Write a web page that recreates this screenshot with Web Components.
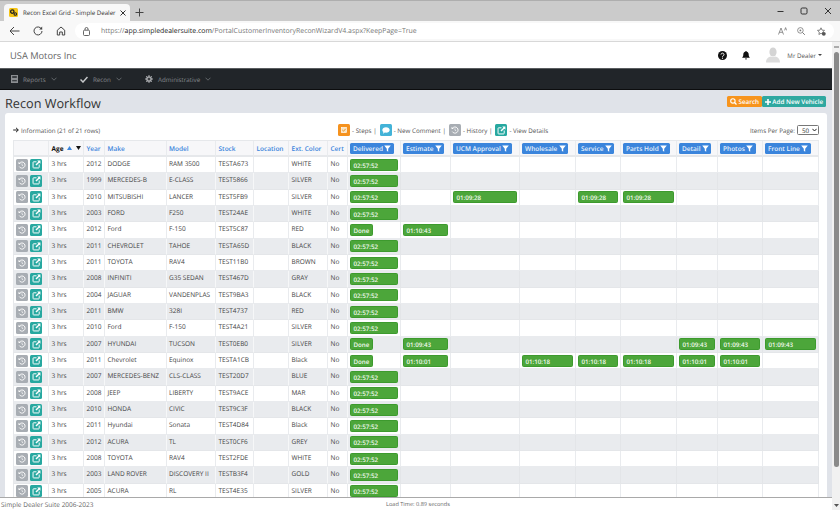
<!DOCTYPE html>
<html>
<head>
<meta charset="utf-8">
<title>Recon Excel Grid</title>
<style>
  html,body{margin:0;padding:0;width:840px;height:510px;overflow:hidden;background:#fff;}
  body{font-family:"Open Sans","Liberation Sans",sans-serif;text-rendering:geometricPrecision;}
</style>
</head>
<body>
<recon-app>
  <win-chrome slot="chrome"></win-chrome>
  <site-header slot="top"></site-header>
  <site-nav slot="top"></site-nav>
  <recon-page>
    <recon-grid></recon-grid>
  </recon-page>
  <site-footer slot="bottom"></site-footer>
  <page-scroll slot="scroll"></page-scroll>
</recon-app>
<script>
const ICON={
  history:`<svg viewBox="0 0 12 12" width="8" height="8"><path d="M2.4 3.2A4.6 4.6 0 1 1 2 8.400" fill="none" stroke="#fff" stroke-width="1.4"/><path d="M.8 1.200v3.400h3.400z" fill="#fff"/><path d="M6 3.600v2.800l1.900 1.100" fill="none" stroke="#fff" stroke-width="1"/></svg>`,
  open:`<svg viewBox="0 0 12 12" width="9" height="9"><path d="M6 2.4H2.2a.8.8 0 0 0-.8.8v6.6c0 .4.4.8.8.8h6.6c.4 0 .8-.4.8-.8V6" fill="none" stroke="#fff" stroke-width="1.3"/><path d="M7 .8h4.2V5L9.7 3.6 6 7.4 4.6 6l3.8-3.8z" fill="#fff"/></svg>`,
  funnel:`<svg viewBox="0 0 10 10" width="7" height="7"><path d="M.3 .6h9.4L6 5.2V9.6L4 8.3V5.2z" fill="#fff"/></svg>`
};

class WinChrome extends HTMLElement{
  constructor(){
    super();
    this.attachShadow({mode:'open'}).innerHTML=`
      <style>
        :host{display:block;height:42px;font-family:"Open Sans","Liberation Sans",sans-serif;color:#333;}
        .strip{height:21px;background:#cbcbcb;border-top:1px solid #aeaeae;box-sizing:border-box;display:flex;align-items:flex-end;padding-left:4px;}
        .tab{width:126px;height:17px;background:#f8f8f8;border-radius:4px 4px 0 0;box-sizing:border-box;display:flex;align-items:center;padding:0 5px;gap:5px;font-size:6.150px;white-space:nowrap;}
        .tab span{width:91px;flex:none;}
        .tab svg{flex:none;}
        .plus{margin:0 0 3px 4px;width:11px;height:11px;}
        .win{margin:0 8px 3px auto;display:flex;gap:14px;height:14px;align-items:center;}
        .bar{height:21px;background:#f8f8f8;border-bottom:1px solid #d8d8d8;box-sizing:border-box;display:flex;align-items:center;padding:0 6px 0 9px;}
        .bar>svg{flex:none;}
        .addr{margin-left:9px;flex:1;height:16px;background:#fff;border-radius:8px;display:flex;align-items:center;padding:0 8px;gap:8px;font-size:6.930px;color:#777;white-space:nowrap;}
        .addr b{font-weight:400;color:#222;}
        .addr .r{margin-left:auto;display:flex;gap:10px;align-items:center;}
      </style>
      <div class="strip">
        <div class="tab">
          <svg width="9" height="9" viewBox="0 0 9 9"><rect width="9" height="9" rx="1.5" fill="#f5c518"/><circle cx="3.3" cy="3.6" r="1.7" fill="none" stroke="#222" stroke-width="1.3"/><circle cx="6.3" cy="6" r="1.3" fill="none" stroke="#222" stroke-width="1.1"/></svg>
          <span>Recon Excel Grid - Simple Dealer</span>
          <svg width="6" height="6" viewBox="0 0 6 6" style="margin-left:1px"><path d="M.5 .5l5 5M5.500 .5l-5 5" stroke="#333" stroke-width="1"/></svg>
        </div>
        <svg class="plus" viewBox="0 0 11 11"><path d="M5.500 1.500v8M1.500 5.500h8" stroke="#444" stroke-width="1"/></svg>
        <div class="win">
          <svg width="8" height="8" viewBox="0 0 8 8"><path d="M1.500 4.500h6" stroke="#333" stroke-width="1"/></svg>
          <svg width="8" height="8" viewBox="0 0 8 8" style="margin-left:2px"><rect x="1" y="1" width="6" height="6" rx="1.200" fill="none" stroke="#333"/></svg>
          <svg width="8" height="8" viewBox="0 0 8 8" style="margin-left:2px"><path d="M1 1l6 6M7 1l-6 6" stroke="#333" stroke-width="1"/></svg>
        </div>
      </div>
      <div class="bar">
        <svg width="11" height="10" viewBox="0 0 11 10"><path d="M10.500 5H1M5 1L1 5l4 4" fill="none" stroke="#444" stroke-width="1"/></svg>
        <svg width="10" height="10" viewBox="0 0 10 10" style="margin-left:13px"><path d="M8.600 3.200A4 4 0 1 0 9 5" fill="none" stroke="#444" stroke-width="1"/><path d="M6.200 3.400h3V.6z" fill="#444"/></svg>
        <svg width="10" height="10" viewBox="0 0 10 10" style="margin-left:13px"><path d="M1.300 9V4.200L5 1l3.700 3.200V9H6.300V6H3.700v3z" fill="none" stroke="#444" stroke-width="1"/></svg>
        <div class="addr">
          <svg width="7" height="9" viewBox="0 0 7 9"><rect x=".5" y="3.200" width="6" height="5.300" rx="1" fill="none" stroke="#555" stroke-width=".9"/><path d="M2 3V2a1.500 1.500 0 0 1 3 0v1" fill="none" stroke="#555" stroke-width=".9"/></svg>
          <div style="margin-left:3px">https://<b>app.simpledealersuite.com</b>/PortalCustomerInventoryReconWizardV4.aspx?KeepPage=True</div>
          <div class="r">
            <svg width="9" height="8" viewBox="0 0 9 8"><path d="M.5 7.500L3 1l2.500 6.500M1.300 5.300h3.400M6.600 3.400l1-2.800 1 2.800" fill="none" stroke="#777" stroke-width=".8"/></svg>
            <svg width="8" height="8" viewBox="0 0 8 8"><circle cx="3.400" cy="3.400" r="2.800" fill="none" stroke="#777" stroke-width=".8"/><circle cx="3.400" cy="3.400" r=".9" fill="#777"/><path d="M5.500 5.500L7.800 7.800" stroke="#777"/></svg>
            <svg width="9" height="9" viewBox="0 0 9 9" style="margin-left:2px"><path d="M4 .8l1 2.300 2.500.3-1.800 1.700.4 2.400L4 6.300 1.900 7.500l.4-2.400L.5 3.400 3 3.100z" fill="none" stroke="#666" stroke-width=".8"/><circle cx="6.800" cy="6.800" r="1.900" fill="#555"/></svg>
          </div>
        </div>
      </div>`;
  }
}

class SiteHeader extends HTMLElement{
  constructor(){
    super();
    this.attachShadow({mode:'open'}).innerHTML=`
      <style>
        :host{display:flex;align-items:center;height:26px;background:#fff;padding:0 10px;font-family:"Open Sans","Liberation Sans",sans-serif;}
        .brand{font-size:9.300px;color:#666;}
        .r{margin-left:auto;display:flex;align-items:center;}
        .who{font-size:6.200px;color:#555;margin-left:7px;}
        .caret{width:0;height:0;border:2.500px solid transparent;border-top-color:#444;border-bottom:0;margin-left:2px;}
      </style>
      <div class="brand">USA Motors Inc</div>
      <div class="r">
        <svg width="9" height="9" viewBox="0 0 9 9"><circle cx="4.500" cy="4.500" r="4.500" fill="#111"/><path d="M3 3.500a1.500 1.400 0 1 1 2.200 1.300c-.5.300-.7.500-.7 1" fill="none" stroke="#fff" stroke-width="1"/><circle cx="4.500" cy="7.200" r=".6" fill="#fff"/></svg>
        <svg width="8" height="9" viewBox="0 0 8 9" style="margin-left:15px"><path d="M4 0a.7.7 0 0 1 .7.8C6 1.100 6.700 2.200 6.700 3.600c0 1.800.6 2.600 1.300 3.200H0c.7-.6 1.300-1.400 1.300-3.200C1.300 2.200 2 1.100 3.300.8A.7.7 0 0 1 4 0zM3 7.400h2a1 1 0 0 1-2 .1z" fill="#111"/></svg>
        <svg width="14" height="16" viewBox="0 0 14 16" style="margin-left:16px"><rect width="14" height="16" fill="#fff"/><ellipse cx="7" cy="5" rx="3.600" ry="4.600" fill="#d4d4d4"/><path d="M0 15.500c0-4 2.500-5.500 5-6 1 .8 3 .8 4 0 2.500.5 5 2 5 6z" fill="#dcdcdc"/></svg>
        <div class="who">Mr Dealer</div>
        <div class="caret"></div>
      </div>`;
  }
}

class SiteNav extends HTMLElement{
  constructor(){
    super();
    const caret=`<svg width="6" height="4" viewBox="0 0 6 4"><path d="M.5 .7L3 3.200 5.500 .7" fill="none" stroke="#7d8186" stroke-width=".7"/></svg>`;
    this.attachShadow({mode:'open'}).innerHTML=`
      <style>
        :host{display:flex;align-items:center;height:22px;box-sizing:border-box;background:#212529;border-top:1px solid #5a5d60;border-bottom:1px solid #0c0d0e;padding-left:11px;font:6.250px "Open Sans","Liberation Sans",sans-serif;color:#85888c;}
        div{display:flex;align-items:center;gap:5px;}
      </style>
      <div style="width:69px"><svg width="7" height="8" viewBox="0 0 7 8"><path d="M0 0h7v8H0zM1.200 1.200v1.500h4.600V1.200zM1.200 5.300v.9h4.600v-.9z" fill="#8b8e92" fill-rule="evenodd"/></svg>Reports ${caret}</div>
      <div style="width:65px"><svg width="8" height="7" viewBox="0 0 8 7"><path d="M.5 3.500L3 6 7.500 1" fill="none" stroke="#c6c8ca" stroke-width="1.500"/></svg>Recon ${caret}</div>
      <div><svg width="8" height="8" viewBox="0 0 8 8"><circle cx="4" cy="4" r="2.200" fill="none" stroke="#a9abae" stroke-width="1.300"/><path d="M4 0v8M0 4h8M1.200 1.200l5.600 5.600M6.800 1.200L1.200 6.800" stroke="#a9abae" stroke-width="1"/><circle cx="4" cy="4" r="1.100" fill="#212529"/></svg>Administrative ${caret}</div>`;
  }
}

class RowBtn extends HTMLElement{
  constructor(){
    super();
    const kind=this.getAttribute('kind')||'history';
    const bg={history:'#a8adb3',open:'#27a8a0',steps:'#f5921e',comment:'#43b3d8'}[kind];
    this.attachShadow({mode:'open'}).innerHTML=`
      <style>
        :host{display:flex;align-items:center;justify-content:center;flex:none;width:12px;height:12px;border-radius:1.500px;background:${bg};}
      </style>
      ${kind==='steps'?`<svg width="6" height="6" viewBox="0 0 6 6"><rect x=".4" y=".4" width="5.200" height="5.200" fill="#fbe3bd" stroke="#fff" stroke-width=".6"/><path d="M1.300 3l1.200 1.200 2.200-2.400" fill="none" stroke="#d47d12" stroke-width=".8"/></svg>`:
        kind==='comment'?`<svg width="8" height="7" viewBox="0 0 8 7"><path d="M4 .3c2.100 0 3.700 1.200 3.700 2.700S6.100 5.700 4 5.700c-.4 0-.8 0-1.200-.1L1 6.800l.4-1.700C.7 4.600.3 3.800.3 3 .3 1.500 1.900.3 4 .3z" fill="#fff"/></svg>`:
        ICON[kind]}`;
  }
}

class FilterBtn extends HTMLElement{
  constructor(){
    super();
    this.attachShadow({mode:'open'}).innerHTML=`
      <style>
        :host{display:inline-flex;align-items:center;gap:1.500px;height:11px;box-sizing:border-box;padding:0 2.500px 0 3px;background:#3b85dc;border-radius:1.500px;color:#e8f1fb;font:600 6.500px "Open Sans","Liberation Sans",sans-serif;white-space:nowrap;}
      </style>
      <slot></slot>${ICON.funnel}`;
  }
}

class TimeChip extends HTMLElement{
  constructor(){
    super();
    this.attachShadow({mode:'open'}).innerHTML=`
      <style>
        :host{display:block;height:12px;box-sizing:border-box;padding-left:2.500px;background:#4ca63a;border:.5px solid #3d9a2e;border-radius:1.500px;color:#f2f9ef;font:600 6.200px/11px "Open Sans","Liberation Sans",sans-serif;white-space:nowrap;}
        :host([short]){width:23px;}
      </style>
      <slot></slot>`;
  }
}

const COLS=[36,35,21,61.5,49.5,38,35,39,20,53,50,69,56,45,56,41,45,56];
const STAGES=['Delivered','Estimate','UCM Approval','Wholesale','Service','Parts Hold','Detail','Photos','Front Line'];
const D='02:57:52';
const ROWS=[
  ['2012','DODGE','RAM 3500','TESTA673','WHITE',[D]],
  ['1999','MERCEDES-B','E-CLASS','TEST5866','SILVER',[D]],
  ['2010','MITSUBISHI','LANCER','TEST5FB9','SILVER',[D,'','01:09:28','','01:09:28','01:09:28']],
  ['2003','FORD','F250','TEST24AE','WHITE',[D]],
  ['2012','Ford','F-150','TEST5C87','RED',['Done','01:10:43']],
  ['2011','CHEVROLET','TAHOE','TESTA65D','BLACK',[D]],
  ['2011','TOYOTA','RAV4','TEST11B0','BROWN',[D]],
  ['2008','INFINITI','G35 SEDAN','TEST467D','GRAY',[D]],
  ['2004','JAGUAR','VANDENPLAS','TEST9BA3','BLACK',[D]],
  ['2011','BMW','328I','TEST4737','RED',[D]],
  ['2010','Ford','F-150','TEST4A21','SILVER',[D]],
  ['2007','HYUNDAI','TUCSON','TEST0EB0','SILVER',['Done','01:09:43','','','','','01:09:43','01:09:43','01:09:43']],
  ['2011','Chevrolet','Equinox','TESTA1CB','Black',['Done','01:10:01','','01:10:18','01:10:18','01:10:18','01:10:01','01:10:01']],
  ['2007','MERCEDES-BENZ','CLS-CLASS','TEST20D7','BLUE',[D]],
  ['2008','JEEP','LIBERTY','TEST9ACE','MAR',[D]],
  ['2010','HONDA','CIVIC','TEST9C3F','BLACK',[D]],
  ['2011','Hyundai','Sonata','TEST4D84','Black',[D]],
  ['2012','ACURA','TL','TEST0CF6','GREY',[D]],
  ['2008','TOYOTA','RAV4','TEST2FDE','WHITE',[D]],
  ['2003','LAND ROVER','DISCOVERY II','TESTB3F4','GOLD',[D]],
  ['2005','ACURA','RL','TEST4E35','SILVER',[D]]
];

class ReconGrid extends HTMLElement{
  constructor(){
    super();
    const head=['Year','Make','Model','Stock','Location','Ext. Color','Cert'].map(t=>`<div class="c h link">${t}</div>`).join('');
    const stages=STAGES.map(t=>`<div class="c h st"><filter-btn>${t}</filter-btn></div>`).join('');
    const body=ROWS.map((r,i)=>{
      const z=i%2?' z':'';
      const cell=t=>`<div class="c t${z}">${t}</div>`;
      let chips='';
      for(let s=0;s<9;s++){
        const v=r[5][s];
        chips+=`<div class="c st${z}">${v?`<time-chip${v==='Done'?' short':''}>${v}</time-chip>`:''}</div>`;
      }
      return `<div class="c first btns${z}"><row-btn kind="history"></row-btn><row-btn kind="open"></row-btn></div>`+
        cell('3 hrs')+cell(r[0])+cell(r[1])+cell(r[2])+cell(r[3])+cell('')+cell(r[4])+cell('No')+chips;
    }).join('');
    this.attachShadow({mode:'open'}).innerHTML=`
      <style>
        :host{display:block;font:6.500px "Open Sans","Liberation Sans",sans-serif;color:#444;}
        .g{display:grid;grid-template-columns:${COLS.map(w=>w+'px').join(' ')};grid-template-rows:16px;grid-auto-rows:16.330px;border-top:1px solid #e6e8eb;width:806px;box-sizing:border-box;}
        .c{display:flex;align-items:center;box-sizing:border-box;padding-left:2.500px;border-right:1px solid #e9ebee;border-bottom:1px solid #e9ebee;white-space:nowrap;overflow:hidden;background:#fff;}
        .first{border-left:1px solid #e6e8eb;}
        .z{background:#e9ebee;border-bottom-color:#e4e6e9;border-right-color:#e3e5e8;}
        .z.t,.z.btns{border-right-color:#f6f7f8;}
        .t{padding-bottom:2px;}
        .h{background:#f7f7f9;border-bottom:2px solid #e6e8eb;}
        .link{color:#3b85dc;font-weight:600;}
        .age{color:#111;font-weight:700;gap:3px;}
        .st{padding:0 2px;}
        .st time-chip{flex:1;}
        .st time-chip[short]{flex:none;}
        .btns{gap:2px;padding-left:2px;}
      </style>
      <div class="g">
        <div class="c h first"></div>
        <div class="c h age">Age
          <svg width="5" height="4" viewBox="0 0 5 4"><path d="M2.500 0L5 4H0z" fill="#3b85dc"/></svg>
          <svg width="5" height="4" viewBox="0 0 5 4" style="margin-left:1px"><path d="M0 0h5L2.500 4z" fill="#111"/></svg>
        </div>
        ${head}${stages}${body}
      </div>`;
  }
}

class ReconPage extends HTMLElement{
  constructor(){
    super();
    const sep=t=>`<span>- ${t}</span>`;
    this.attachShadow({mode:'open'}).innerHTML=`
      <style>
        :host{display:block;flex:1;min-height:0;overflow:hidden;background:#e0e3e9;padding:0 5px;font-family:"Open Sans","Liberation Sans",sans-serif;}
        .top{display:flex;height:23px;align-items:flex-start;}
        h1{margin:2px 0 0;font-size:12.700px;line-height:22px;font-weight:400;color:#333;}
        .act{margin-left:auto;margin-right:1px;display:flex;padding-top:6px;}
        .act div{height:11px;display:flex;align-items:center;justify-content:center;gap:1.500px;color:#fff;font-size:6.300px;font-weight:600;border-radius:1.500px;}
        .card{background:#fff;border-radius:3px 3px 0 0;padding:10px 8px 0;height:400px;box-sizing:border-box;}
        .tools{display:flex;align-items:center;height:14px;margin-bottom:3px;font-size:6.250px;color:#555;}
        .info{display:flex;align-items:center;gap:2px;width:325px;}
        .leg{display:flex;align-items:center;gap:2px;}
        .leg span{margin-right:1px;white-space:nowrap;}
        .pp{margin-left:auto;display:flex;align-items:center;gap:2px;}
        .sel{width:22px;height:10px;box-sizing:border-box;border:1px solid #777;border-radius:1.500px;display:flex;align-items:center;justify-content:space-between;padding:0 1.500px 0 4px;font-size:6.250px;color:#333;}
      </style>
      <div class="top">
        <h1>Recon Workflow</h1>
        <div class="act">
          <div style="width:35px;background:#f7941d"><svg width="7" height="7" viewBox="0 0 7 7"><circle cx="2.900" cy="2.900" r="2.200" fill="none" stroke="#fff" stroke-width="1.100"/><path d="M4.500 4.500L6.500 6.500" stroke="#fff" stroke-width="1.300"/></svg>Search</div>
          <div style="width:64px;background:#2fa8a0"><svg width="6" height="6" viewBox="0 0 6 6"><path d="M3 0v6M0 3h6" stroke="#fff" stroke-width="1.600"/></svg>Add New Vehicle</div>
        </div>
      </div>
      <div class="card">
        <div class="tools">
          <div class="info"><svg width="6" height="6" viewBox="0 0 6 6"><path d="M.2 3h5M3 .8L5.300 3 3 5.200" fill="none" stroke="#222" stroke-width="1"/></svg>Information (21 of 21 rows)</div>
          <div class="leg">
            <row-btn kind="steps"></row-btn>${sep('Steps |')}
            <row-btn kind="comment"></row-btn>${sep('New Comment |')}
            <row-btn kind="history"></row-btn>${sep('History |')}
            <row-btn kind="open"></row-btn>${sep('View Details')}
          </div>
          <div class="pp">Items Per Page: <div class="sel">50<svg width="5" height="4" viewBox="0 0 5 4"><path d="M.4 .8L2.500 3 4.600 .8" fill="none" stroke="#222" stroke-width="1"/></svg></div></div>
        </div>
        <slot></slot>
      </div>`;
  }
}

class SiteFooter extends HTMLElement{
  constructor(){
    super();
    this.attachShadow({mode:'open'}).innerHTML=`
      <style>
        :host{display:grid;grid-template-columns:385px 1fr;align-items:center;height:13px;box-sizing:border-box;background:#fff;border-top:1px solid #a9a9a9;padding-left:1px;font-family:"Open Sans","Liberation Sans",sans-serif;color:#666;}
        .a{font-size:6.500px;}
        .b{font-size:5.600px;}
      </style>
      <div class="a">Simple Dealer Suite 2006-2023</div>
      <div class="b">Load Time: 0.89 seconds</div>`;
  }
}

class PageScroll extends HTMLElement{
  constructor(){
    super();
    this.attachShadow({mode:'open'}).innerHTML=`
      <style>
        :host{display:flex;flex-direction:column;align-items:center;width:8px;height:100%;background:#f1f1f1;box-sizing:border-box;padding-top:4px;}
        .t{width:5px;height:415px;background:#8a8a8a;border-radius:2.500px;margin-top:4px;}
        svg{flex:none;}
        .d{margin-top:auto;margin-bottom:3px;}
      </style>
      <svg width="5" height="2" viewBox="0 0 5 2"><path d="M0 1h5" stroke="#666" stroke-width="1"/></svg>
      <div class="t"></div>
      <svg class="d" width="5" height="3" viewBox="0 0 5 3"><path d="M0 0h5L2.500 3z" fill="#555"/></svg>`;
  }
}

class ReconApp extends HTMLElement{
  constructor(){
    super();
    this.attachShadow({mode:'open'}).innerHTML=`
      <style>
        :host{display:flex;flex-direction:column;width:840px;height:510px;overflow:hidden;}
        .below{flex:1;min-height:0;display:flex;}
        .main{flex:1;min-width:0;display:flex;flex-direction:column;}
      </style>
      <slot name="chrome"></slot>
      <div class="below">
        <div class="main">
          <slot name="top"></slot>
          <slot></slot>
          <slot name="bottom"></slot>
        </div>
        <slot name="scroll"></slot>
      </div>`;
  }
}

customElements.define('row-btn',RowBtn);
customElements.define('filter-btn',FilterBtn);
customElements.define('time-chip',TimeChip);
customElements.define('win-chrome',WinChrome);
customElements.define('site-header',SiteHeader);
customElements.define('site-nav',SiteNav);
customElements.define('recon-grid',ReconGrid);
customElements.define('recon-page',ReconPage);
customElements.define('site-footer',SiteFooter);
customElements.define('page-scroll',PageScroll);
customElements.define('recon-app',ReconApp);
</script>
</body>
</html>
